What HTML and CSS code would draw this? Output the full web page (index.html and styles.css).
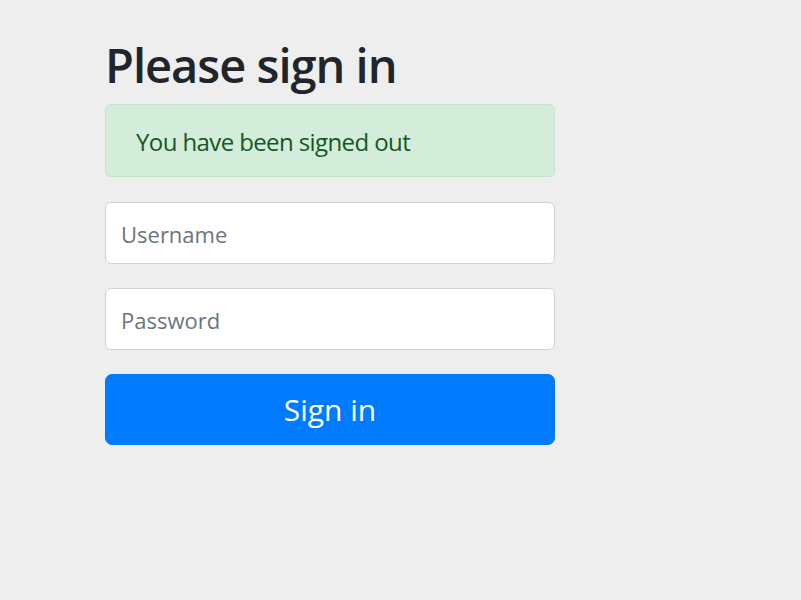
FILE: index.html
```html
<!DOCTYPE html>
<html lang="en">
<head>
<meta charset="utf-8">
<title>Please sign in</title>
<link rel="stylesheet" href="styles.css">
</head>
<body>
<div class="container">
  <form class="form-signin">
    <h2 class="form-signin-heading">Please sign in</h2>
    <div class="alert alert-success" role="alert">You have been signed out</div>
    <p class="field">
      <label for="username" class="sr-only">Username</label>
      <input type="text" id="username" name="username" class="form-control" placeholder="Username">
    </p>
    <p class="field">
      <label for="password" class="sr-only">Password</label>
      <input type="password" id="password" name="password" class="form-control" placeholder="Password">
    </p>
    <button class="btn" type="submit">Sign in</button>
  </form>
</div>
</body>
</html>
```
FILE: styles.css
```css
html, body {
  margin: 0;
  padding: 0;
  background: #eeeeee;
}
body {
  font-family: "Open Sans", "Noto Sans", "Liberation Sans", sans-serif;
  color: #212529;
}
.container {
  padding-top: 36px;
  padding-left: 105px;
}
.form-signin {
  width: 450px;
  display: flex;
  flex-direction: column;
}
.form-signin-heading {
  margin: 0 0 10px 0;
  font-size: 47px;
  font-weight: 600;
  letter-spacing: -1px;
  line-height: 58px;
  color: #212529;
}
.alert {
  box-sizing: border-box;
  height: 73px;
  padding: 19px 30px 17px 30px;
  font-size: 24px;
  letter-spacing: -0.6px;
  line-height: 35px;
  border: 1px solid #c3e6cb;
  border-radius: 6px;
  background: #d4edda;
  color: #155724;
  margin-bottom: 25px;
}
.field {
  margin: 0 0 24px 0;
}
.sr-only {
  position: absolute;
  width: 1px;
  height: 1px;
  padding: 0;
  margin: -1px;
  overflow: hidden;
  clip: rect(0, 0, 0, 0);
  border: 0;
}
.form-control {
  display: block;
  box-sizing: border-box;
  width: 100%;
  padding: 14px 15px 12px 15px;
  font-family: inherit;
  font-size: 22px;
  line-height: 34px;
  color: #495057;
  background: #ffffff;
  border: 1px solid #ced4da;
  border-radius: 6px;
  outline: none;
}
.form-control::placeholder {
  color: #6c757d;
  opacity: 1;
}
.btn {
  display: block;
  box-sizing: border-box;
  width: 100%;
  height: 71px;
  padding: 0;
  font-family: inherit;
  font-size: 30px;
  color: #ffffff;
  background: #007bff;
  border: 1px solid #007bff;
  border-radius: 7px;
  cursor: pointer;
}
```
